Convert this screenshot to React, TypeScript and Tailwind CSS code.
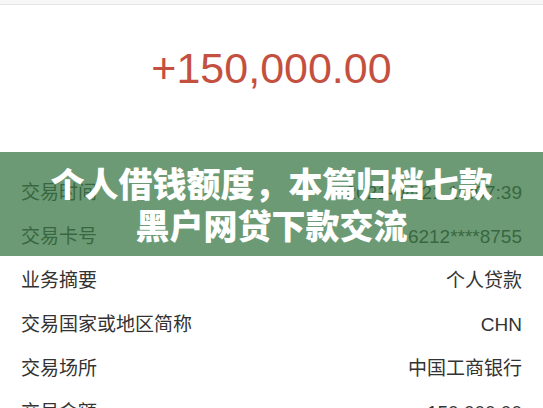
import React from "react";

const rows: [string, string][] = [
  ["交易时间", "2021-04-21 10:07:39"],
  ["交易卡号", "6212****8755"],
  ["业务摘要", "个人贷款"],
  ["交易国家或地区简称", "CHN"],
  ["交易场所", "中国工商银行"],
  ["交易金额", "150,000.00"],
];

export default function App() {
  return (
    <div
      className="relative w-[543px] h-[408px] overflow-hidden bg-white"
      style={{ fontFamily: '"Liberation Sans", "Noto Sans CJK SC", sans-serif' }}
    >
      <div className="h-[4px] bg-[#f7f7f7]" />
      <div className="h-px bg-[#e6e6e6]" />
      <div className="pt-[38px] pb-[78px] flex justify-center">
        <div className="text-[43px] leading-[50px] text-[#c4503f] font-normal">+150,000.00</div>
      </div>
      <div className="flex flex-col">
        {rows.map(([k, v]) => (
          <div key={k} className="h-[44px] px-[21px] flex items-center justify-between text-[19px] text-[#333333]">
            <span>{k}</span>
            <span>{v}</span>
          </div>
        ))}
      </div>
      <div className="absolute left-0 right-0 top-[152px] h-[104px] bg-[rgba(59,120,69,0.75)] pt-[10px] flex flex-col items-center">
        <div
          className="text-white text-[34px] leading-[42px] font-black"
          style={{ fontFamily: '"Noto Sans CJK SC", sans-serif' }}
        >
          个人借钱额度，本篇归档七款
        </div>
        <div
          className="text-white text-[34px] leading-[42px] font-black"
          style={{ fontFamily: '"Noto Sans CJK SC", sans-serif' }}
        >
          黑户网贷下款交流
        </div>
      </div>
    </div>
  );
}
